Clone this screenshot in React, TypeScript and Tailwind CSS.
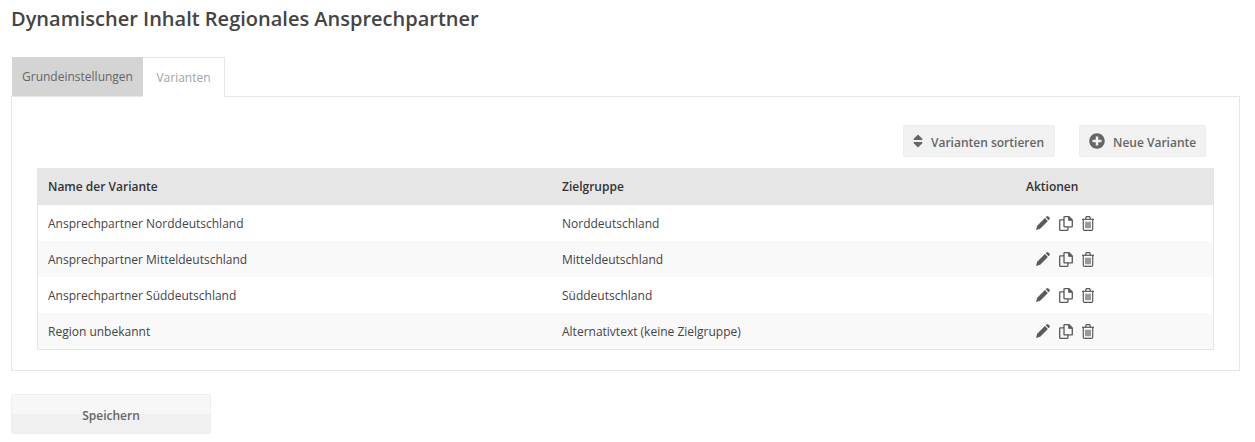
import { FaSort, FaPlusCircle } from "react-icons/fa";

const rows = [
  ["Ansprechpartner Norddeutschland", "Norddeutschland"],
  ["Ansprechpartner Mitteldeutschland", "Mitteldeutschland"],
  ["Ansprechpartner Süddeutschland", "Süddeutschland"],
  ["Region unbekannt", "Alternativtext (keine Zielgruppe)"],
];

function PencilIcon() {
  return (
    <svg viewBox="0 0 14 14" className="w-[14px] h-[14px]" fill="currentColor">
      <path d="M0 14 L1.200 9.800 L8.900 2.100 L11.900 5.100 L4.200 12.800Z" />
      <path d="M9.700 1.300 L10.400 .6 c.6-.6 1.400-.6 2 0 l1 1 c.6.6.6 1.400 0 2 L12.700 4.300Z" />
    </svg>
  );
}

function CopyIcon() {
  return (
    <svg viewBox="0 0 14 15" className="w-[14px] h-[15px]" fill="none" stroke="currentColor" strokeWidth="1.3">
      <path d="M5 3.800H1.300a.6.6 0 0 0-.6.6v9.300a.6.6 0 0 0 .6.6h7a.6.6 0 0 0 .6-.6v-3.300" />
      <path d="M5 1.300a.6.6 0 0 1 .6-.6h4.400l3.300 3.300v6.300a.6.6 0 0 1-.6.6H5.600a.6.6 0 0 1-.6-.6z" />
      <path d="M9.700 .9V4.300h3.400" fill="currentColor" strokeWidth="1" />
    </svg>
  );
}

function TrashIcon() {
  return (
    <svg viewBox="0 0 12 15" className="w-[12px] h-[15px]" fill="none" stroke="currentColor" strokeWidth="1.200">
      <path d="M0 3.300h12" />
      <path d="M3.500 3.100 4.300.7h3.400l.8 2.400" />
      <path d="M1.300 3.300v10c0 .7.500 1.100 1.100 1.100h7.200c.6 0 1.100-.4 1.100-1.100v-10" />
      <path d="M4 5.800v6.400M6 5.800v6.400M8 5.800v6.400" />
    </svg>
  );
}

export default function App() {
  return (
    <div className="w-[1255px] h-[442px] overflow-hidden bg-white pl-[11px] pr-[15px] text-[#444] font-['Open_Sans',sans-serif]">
      <h1 className="h-[57px] pt-[6px] text-[20px] leading-[26px] font-semibold text-[#444]">
        Dynamischer Inhalt Regionales Ansprechpartner
      </h1>
      <div className="flex h-[40px] pl-px relative z-10">
        <div className="w-[131px] h-[39px] bg-[#d4d4d4] flex items-center justify-center text-[12px] text-[#666]">
          Grundeinstellungen
        </div>
        <div className="w-[82px] h-[40px] bg-white border border-b-0 border-l-0 border-[#e6e6e6] flex items-center justify-center text-[12px] text-[#a3a3a3]">
          Varianten
        </div>
      </div>
      <div className="-mt-px h-[275px] border border-[#e6e6e6] pl-[25px] pr-[25px] pt-[28px]">
        <div className="flex justify-end gap-[24px] pr-[8px] h-[32px]">
          <button className="w-[152px] h-[32px] rounded-[2px] bg-[#f2f2f2] border border-[#eeeeee] flex items-center pl-[9px] gap-[8px] text-[12px] font-semibold text-[#666]">
            <FaSort className="w-[10px] h-[16px] text-[#666]" />
            <span className="pt-[3px]">Varianten sortieren</span>
          </button>
          <button className="w-[127px] h-[32px] rounded-[2px] bg-[#f2f2f2] border border-[#eeeeee] flex items-center pl-[9px] gap-[8px] text-[12px] font-semibold text-[#666]">
            <FaPlusCircle className="w-[16px] h-[16px] text-[#666]" />
            <span className="pt-[3px]">Neue Variante</span>
          </button>
        </div>
        <div className="mt-[11px] w-[1177px] border-b border-l border-r border-[#e6e6e6]">
          <div className="grid grid-cols-[514px_464px_1fr] h-[37px] items-center bg-[#e6e6e6] pl-[10px] text-[12px] font-semibold text-[#333]">
            <div className="pt-px">Name der Variante</div>
            <div className="pt-px">Zielgruppe</div>
            <div className="pt-px">Aktionen</div>
          </div>
          {rows.map((r, i) => (
            <div
              key={r[0]}
              className={`grid grid-cols-[514px_473px_1fr] h-[36px] items-center pl-[10px] text-[12px] text-[#444] ${i % 2 === 1 ? "bg-[#f9f9f9]" : "bg-white"}`}
            >
              <div className="pt-[2px]">{r[0]}</div>
              <div className="pt-[2px]">{r[1]}</div>
              <div className="flex items-center ml-px text-[#5a5a5a]">
                <span className="mr-[9px]"><PencilIcon /></span>
                <span className="mr-[9px]"><CopyIcon /></span>
                <TrashIcon />
              </div>
            </div>
          ))}
        </div>
      </div>
      <button className="mt-[23px] w-[200px] h-[40px] rounded-[2px] border border-[#eeeeee] bg-[linear-gradient(#f7f7f7_50%,#f0f0f0_50%)] text-[12px] font-semibold text-[#666] flex items-center justify-center pt-[3px]">
        Speichern
      </button>
    </div>
  );
}
